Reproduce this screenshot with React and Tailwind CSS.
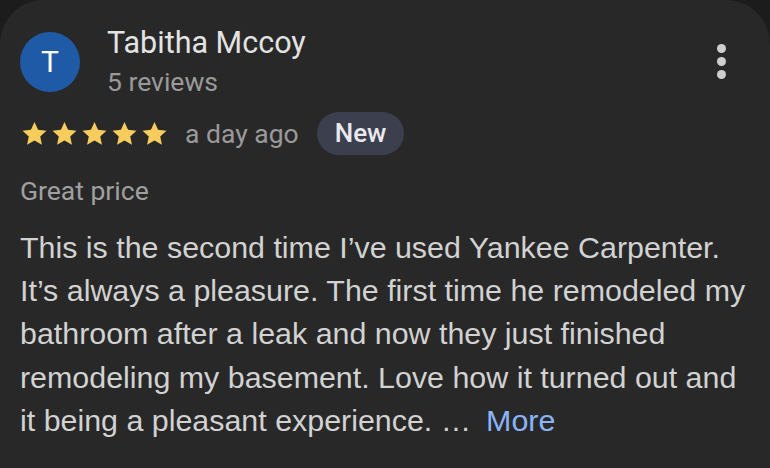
import React from "react";

function Star() {
  return (
    <svg width="29" height="28" viewBox="0 0 24 24" className="block">
      <path
        d="M12 1.8l3.05 6.6 7.2.8-5.35 4.9 1.5 7.1L12 17.6l-6.4 3.6 1.5-7.1L1.75 9.2l7.2-.8z"
        fill="#f6cc5c"
      />
    </svg>
  );
}

export default function App() {
  const lines = [
    "This is the second time I\u2019ve used Yankee Carpenter.",
    "It\u2019s always a pleasure. The first time he remodeled my",
    "bathroom after a leak and now they just finished",
    "remodeling my basement. Love how it turned out and",
  ];
  const roboto = { fontFamily: "Roboto, 'Liberation Sans', sans-serif" };
  return (
    <div className="w-[770px] h-[468px] bg-[#1c1c1c] overflow-hidden">
      <div className="w-full h-full bg-[#282828] rounded-t-[44px] px-5 pt-[31px]">
        <div className="flex items-start">
          <div className="w-[60px] h-[60px] rounded-full bg-[#1f5aa6] flex items-center justify-center mt-[1px] shrink-0">
            <span className="text-white text-[30px] leading-none" style={roboto}>
              T
            </span>
          </div>
          <div className="ml-[27px] flex-1" style={roboto}>
            <div className="text-[#e3e3e3] text-[30.5px] leading-[34px] -mt-[5px]">Tabitha Mccoy</div>
            <div className="text-[#9a9a9a] text-[26.5px] leading-[30px] mt-[7px]">5 reviews</div>
          </div>
          <div className="flex flex-col gap-[4px] mt-[13px] mr-[24px]">
            <span className="w-[9px] h-[9px] rounded-full bg-[#cfcfcf]" />
            <span className="w-[9px] h-[9px] rounded-full bg-[#cfcfcf]" />
            <span className="w-[9px] h-[9px] rounded-full bg-[#cfcfcf]" />
          </div>
        </div>
        <div className="flex items-center mt-[15px]" style={roboto}>
          <div className="flex gap-[1px]">
            <Star />
            <Star />
            <Star />
            <Star />
            <Star />
          </div>
          <span className="text-[#9a9a9a] text-[26.5px] ml-[16px]">a day ago</span>
          <span className="ml-[18px] bg-[#3b3f4e] text-[#e8e8ee] text-[26px] font-medium rounded-full px-[18px] h-[43px] flex items-center">
            New
          </span>
        </div>
        <div className="text-[#a0a0a0] text-[26.5px] mt-[21px] leading-[30px]" style={roboto}>
          Great price
        </div>
        <div
          className="text-[#d2d2d2] text-[30.4px] leading-[43.2px] mt-[20px]"
          style={{ fontFamily: "'Liberation Sans', Arial, sans-serif" }}
        >
          {lines.map((l) => (
            <div key={l} className="whitespace-nowrap">{l}</div>
          ))}
          <div className="whitespace-nowrap">
            {"it being a pleasant experience. \u2026"}
            <span className="text-[#8ab4f8] ml-[15px]">More</span>
          </div>
        </div>
      </div>
    </div>
  );
}
